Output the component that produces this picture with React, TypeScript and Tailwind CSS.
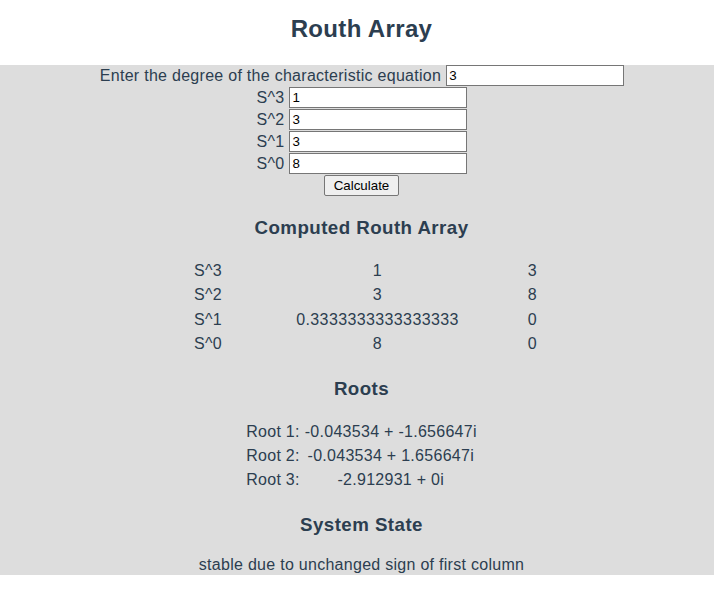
import React from 'react'

const coeffs = [
  { label: 'S^3', value: '1' },
  { label: 'S^2', value: '3' },
  { label: 'S^1', value: '3' },
  { label: 'S^0', value: '8' },
]

const routh = [
  ['S^3', '1', '3'],
  ['S^2', '3', '8'],
  ['S^1', '0.3333333333333333', '0'],
  ['S^0', '8', '0'],
]

const roots = [
  ['Root 1:', '-0.043534 + -1.656647i'],
  ['Root 2:', '-0.043534 + 1.656647i'],
  ['Root 3:', '-2.912931 + 0i'],
]

const inputClass =
  'h-[21px] w-[178px] border border-[#767676] bg-white px-[2px] text-[13.33px] tracking-normal text-black outline-none'

export default function App() {
  return (
    <div
      className="min-h-[597px] bg-white text-[#2c3e50]"
      style={{ fontFamily: '"Liberation Sans", Arial, sans-serif' }}
    >
      {/* Title */}
      <header className="h-[65px] pl-[9px] pt-[15px] text-center">
        <h1 className="text-[24px] font-bold leading-[28px] tracking-[0.35px]">Routh Array</h1>
      </header>

      <main className="bg-[#dddddd] pb-[1px] pl-[9px] tracking-[0.28px]">
        {/* Form */}
        <div className="flex flex-col items-center text-[16px]">
          <div className="flex h-[22px] items-start justify-center gap-[5px] pl-[1px]">
            <span className="leading-[21px]">Enter the degree of the characteristic equation</span>
            <input className={inputClass} defaultValue="3" />
          </div>
          {coeffs.map((c) => (
            <div key={c.label} className="flex h-[22px] items-start justify-center gap-[5px] pl-[1px]">
              <span className="leading-[21px]">{c.label}</span>
              <input className={inputClass} defaultValue={c.value} />
            </div>
          ))}
          <button className="h-[21px] w-[75px] rounded-[2px] border border-[#767676] bg-[#efefef] text-[13.33px] leading-none tracking-normal text-black">
            Calculate
          </button>
        </div>

        {/* Routh table */}
        <h3 className="mt-[21px] text-center text-[18.72px] font-bold leading-[22px] tracking-[0.45px]">
          Computed Routh Array
        </h3>
        <div className="mt-[20px] pl-[8px]">
          <div className="mx-auto grid w-[347px] grid-cols-[96px_179px_1fr] text-[16px] leading-[24.3px]">
            {routh.map((r) => (
              <React.Fragment key={r[0]}>
                <div className="px-[2px]">{r[0]}</div>
                <div className="text-center tracking-[0.38px]">{r[1]}</div>
                <div className="pr-[2px] text-right">{r[2]}</div>
              </React.Fragment>
            ))}
          </div>
        </div>

        {/* Roots */}
        <h3 className="mt-[22px] text-center text-[18.72px] font-bold leading-[22px] tracking-[0.45px]">
          Roots
        </h3>
        <div className="mt-[20px] flex justify-center">
          <div className="grid grid-cols-[auto_auto] gap-x-[5px] text-[16px] leading-[24px]">
            {roots.map((r) => (
              <React.Fragment key={r[0]}>
                <div>{r[0]}</div>
                <div className="text-center">{r[1]}</div>
              </React.Fragment>
            ))}
          </div>
        </div>

        {/* State */}
        <h3 className="mt-[22px] text-center text-[18.72px] font-bold leading-[22px] tracking-[0.45px]">
          System State
        </h3>
        <p className="mt-[20px] text-center text-[16px] leading-[18px]">
          stable due to unchanged sign of first column
        </p>
      </main>
    </div>
  )
}
